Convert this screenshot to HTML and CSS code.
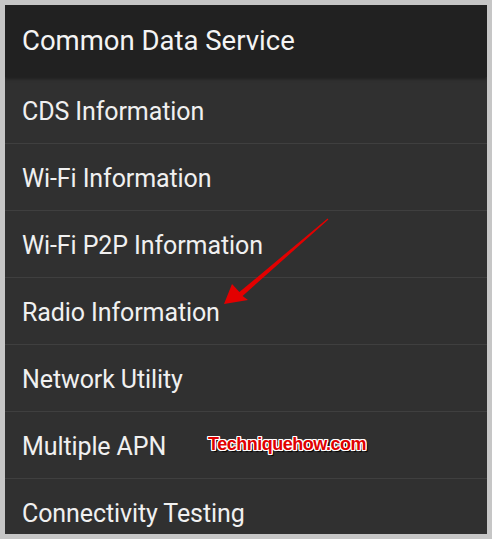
FILE: index.html
```html
<!DOCTYPE html>
<html lang="en">
<head>
  <meta charset="UTF-8">
  <meta name="viewport" content="width=device-width, initial-scale=1.0">
  <title>Common Data Service</title>
  <link rel="stylesheet" href="styles.css">
</head>
<body>
  <div class="screen">
    <div class="header">Common Data Service</div>
    <ul class="menu">
      <li class="item">CDS Information</li>
      <li class="item">Wi-Fi Information</li>
      <li class="item">Wi-Fi P2P Information</li>
      <li class="item">Radio Information</li>
      <li class="item">Network Utility</li>
      <li class="item">Multiple APN</li>
      <li class="item">Connectivity Testing</li>
    </ul>

    <!-- annotation arrow -->
    <svg class="arrow" width="492" height="539" viewBox="0 0 492 539">
      <polygon fill="#e30000" points="224,304 232,284 239.4,292.1 327.6,218.4 328.4,219.6 242.6,295.9 248,300"/>
    </svg>
    <div class="watermark">Techniquehow.com</div>
  </div>
</body>
</html>
```

FILE: styles.css
```css
/* styles.css */
body {
  margin: 0;
  background-color: #c6c6c6;
  font-family: Roboto, "Noto Sans", Arial, sans-serif;
}

.screen {
  position: relative;
  margin: 5px;
  width: 482px;
  height: 529px;
  overflow: hidden;
  background-color: #303030;
}

.header {
  height: 72px;
  box-sizing: border-box;
  padding: 19px 0 0 17px;
  background-color: #212121;
  color: #f4f4f4;
  font-size: 27.5px;
  box-shadow: 0 2px 3px rgba(0, 0, 0, 0.35);
  position: relative;
}

.menu {
  list-style: none;
  margin: 0;
  padding: 0;
}

.item {
  height: 67px;
  box-sizing: border-box;
  padding: 20px 0 0 17px;
  border-bottom: 1px solid #3f3f3f;
  color: #f0f0f0;
  font-size: 25px;
  letter-spacing: -0.1px;
}

.arrow {
  position: absolute;
  left: -5px;
  top: -5px;
}

.watermark {
  position: absolute;
  left: 203px;
  top: 429px;
  color: #e00000;
  font-family: "Liberation Sans", Arial, sans-serif;
  font-weight: bold;
  font-size: 18px;
  letter-spacing: -0.5px;
  text-shadow: 1px 0 0 #fff, -1px 0 0 #fff, 0 1px 0 #fff, 0 -1px 0 #fff,
    1px 1px 0 #fff, -1px -1px 0 #fff, 1px -1px 0 #fff, -1px 1px 0 #fff,
    2px 2px 1px #000;
}
```
